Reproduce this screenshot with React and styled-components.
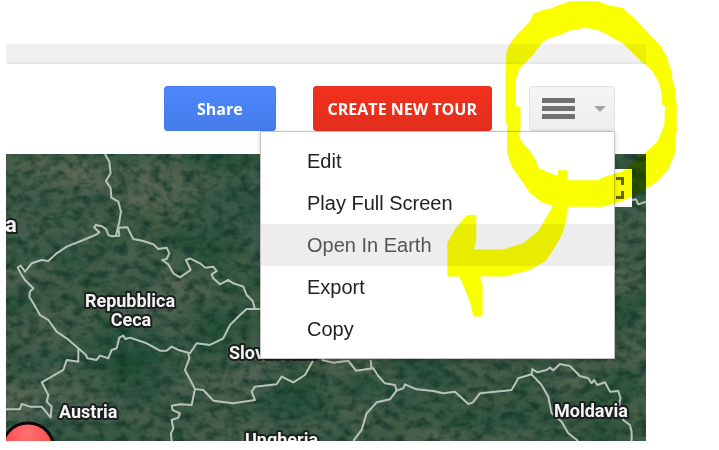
import React from 'react';
import styled, { createGlobalStyle } from 'styled-components';

const menuItems = ['Edit', 'Play Full Screen', 'Open In Earth', 'Export', 'Copy'];

const borders = [
    '315,27 328,50 332,85 318,108 332,130 334,158 355,170 363,200 358,230 348,272',
    '62,385 53,367 62,362 75,380 95,355 125,345 145,348 170,325 200,305 250,285 290,268 298,262 282,247 288,240 306,244 318,252 325,270 335,274 358,272 355,248 382,247 400,282 430,288 460,298 475,312 500,308 508,325 500,342 487,345 505,358 520,385 540,397 572,375 558,345 570,340 600,355 616,368 640,365 650,378 635,388 640,400 660,418 685,405 700,415 730,425 740,450 758,468 765,492',
    '62,385 75,405 100,430 90,440 88,455 100,475 120,510 145,525 170,560 200,580 235,610 258,630 262,640 290,645 300,632 325,640 335,615 350,610 358,578 370,572 376,582 390,578 440,595 480,617 500,617 515,605 535,615 560,622 570,625 590,595 630,600 670,580 690,540 720,510 740,492 785,492',
    '235,612 235,650 200,645 190,675 125,712 145,750 140,770 155,785 152,818 125,785 90,785 65,777 60,793 18,793',
    '565,625 568,640 555,675 585,732 610,735 640,767 700,775 765,765 755,740 765,725 830,718 845,695 880,712 915,690 940,645',
    '585,732 575,780 540,778 515,782 518,795 540,805 535,818 515,825 520,850 513,865 515,888',
    '965,645 1000,653 1045,647 1068,677 1120,670 1135,693 1155,715 1185,720 1190,737 1210,730 1215,718 1250,733 1300,738 1330,745 1365,740 1405,777 1418,773 1440,745 1535,735 1555,700 1595,688 1597,672 1612,682 1640,675 1650,668 1660,676 1680,657 1710,663 1740,693 1765,700 1775,715 1782,705 1792,720 1815,712 1830,740 1855,738 1862,760 1858,775 1870,825 1890,840 1895,860 1895,888',
    '1112,645 1115,670',
    '1190,737 1170,763 1130,772 1100,805 1085,855 1060,888',
    '1595,688 1625,720 1645,755 1655,805 1685,830 1705,865 1735,888',
    '1895,165 1908,163 1915,178 1938,170'
];

const places = [
    { name: 'Repubblica', x: 124, y: 153, anchor: 'middle' },
    { name: 'Ceca', x: 125, y: 172, anchor: 'middle' },
    { name: 'Austria', x: 53, y: 264 },
    { name: 'Slovacchia', x: 223, y: 205 },
    { name: 'Ungheria', x: 239, y: 292 },
    { name: 'Moldavia', x: 548, y: 263 }
];

const Terrain = () => (
    <MapDrawing viewBox="0 0 640 287" preserveAspectRatio="xMinYMin slice" role="img" aria-label="Satellite map">
        <defs>
            <filter id="patches" x="0" y="0" width="100%" height="100%" colorInterpolationFilters="sRGB">
                <feTurbulence type="fractalNoise" baseFrequency="0.011 0.018" numOctaves="5" seed="8" />
                <feColorMatrix values="0.34 0 0 0 0.08  0.14 0 0 0 0.29  0.16 0.06 0 0 0.17  0 0 0 0 1" />
            </filter>
            <filter id="grain" x="0" y="0" width="100%" height="100%" colorInterpolationFilters="sRGB">
                <feTurbulence type="fractalNoise" baseFrequency="0.09 0.12" numOctaves="4" seed="21" />
                <feColorMatrix values="0 0 0 0 0.06  0 0 0 0 0.2  0 0 0 0 0.15  0 1.8 0 0 -0.72" />
            </filter>
            <radialGradient id="pin" cx="50%" cy="20%" r="70%">
                <stop offset="0" stopColor="#ff7272" />
                <stop offset="1" stopColor="#f93a3a" />
            </radialGradient>
        </defs>
        <rect width="640" height="287" fill="#3e5b48" />
        <rect width="640" height="287" filter="url(#patches)" />
        <rect width="640" height="287" filter="url(#grain)" />
        <g transform="translate(-6 -9) scale(0.3333)" fill="none" stroke="#b7c3ba" strokeWidth="6" strokeLinejoin="round">
            {borders.map(points => <polyline points={points} key={points} />)}
        </g>
        {places.map(({ name, x, y, anchor }) => (
            <PlaceName x={x} y={y} textAnchor={anchor} key={name}>{name}</PlaceName>
        ))}
        <PlaceName $large x="-1" y="78">a</PlaceName>
        <circle cx="22" cy="295" r="26" fill="url(#pin)" stroke="#0a0a0a" strokeWidth="3" />
    </MapDrawing>
);

const Highlighter = () => (
    <Ink viewBox="-99 0 692 954" aria-hidden="true">
        <path
            fillRule="evenodd"
            d="M270 4H355L385 15L430 24L465 55L500 92L545 140L565 175L570 200L578 215L579 240L587 265V305L592 308V400L587 405V460L565 512L535 545L480 580L430 605L370 622H263L260 660L250 700L225 745L198 785L150 812L75 832H0L8 855V952H-20L-28 915L-45 870L-62 832H-98V730L-75 690L-40 647H-11V725L-18 750H70L130 732L175 695L205 645L220 620L185 608L150 580L130 550L95 500L82 460V372L77 370V212L80 155L92 130L110 105L150 65L160 42L190 30L215 25L240 14Z
            M315 84L270 92L240 106L215 113L190 125L160 165L120 205L108 240V318L122 322V398L115 402L125 425L155 460L180 508L235 530V512H263V542H355L375 532L430 515L470 480L500 458L535 425L555 375L557 320L548 315V290L540 250L515 210L480 180L430 130L380 103L350 88Z"
        />
    </Ink>
);

export default function App() {
    return (
        <>
            <GlobalStyle />
            <Page>
                <Strip />
                <Toolbar>
                    <ShareButton type="button">Share</ShareButton>
                    <CreateButton type="button">CREATE NEW TOUR</CreateButton>
                    <MenuAnchor>
                        <MenuButton type="button" aria-label="Tour options" aria-expanded="true">
                            <Bars>
                                <Bar />
                                <Bar />
                                <Bar />
                            </Bars>
                            <Caret />
                        </MenuButton>
                        <Menu>
                            {menuItems.map(item => (
                                <li key={item}>
                                    <MenuItem type="button" $active={item === 'Open In Earth'}>{item}</MenuItem>
                                </li>
                            ))}
                        </Menu>
                        <Highlighter />
                    </MenuAnchor>
                </Toolbar>
                <MapArea>
                    <Terrain />
                    <FullScreenButton type="button" aria-label="Full screen">
                        <svg width="22" height="22" viewBox="0 0 22 22" fill="none" stroke="#666" strokeWidth="3">
                            <path d="M1.5 8V1.5H8M14 1.5H20.5V8M20.5 14V20.5H14M8 20.5H1.5V14" />
                        </svg>
                    </FullScreenButton>
                </MapArea>
            </Page>
        </>
    );
}

const GlobalStyle = createGlobalStyle`
    * {
        box-sizing: border-box;
    }

    body {
        margin: 0;
        background: #fff;
        font-family: "Liberation Sans", Arial, sans-serif;
    }
`;

const Page = styled.main`
    padding: 44px 73px 9px 6px;
`;

const Strip = styled.div`
    height: 20px;
    background: #f0f0f0;
    border-bottom: 2px solid #e7e7e7;
`;

const Toolbar = styled.header`
    display: flex;
    justify-content: flex-end;
    gap: 37px;
    padding: 22px 31px 23px 0;
`;

const Button = styled.button`
    height: 45px;
    border: 1px solid transparent;
    border-radius: 3px;
    cursor: pointer;
`;

const ActionButton = styled(Button)`
    color: #fff;
    font-family: "Open Sans", sans-serif;
    font-size: 16px;
    font-weight: 700;
    white-space: nowrap;
`;

const ShareButton = styled(ActionButton)`
    padding: 0 32px;
    background: linear-gradient(#4d88fd, #457be9);
    border-color: #3f7af0;
`;

const CreateButton = styled(ActionButton)`
    padding: 0 14px;
    background: linear-gradient(#f2301e, #e22e1c);
    border-color: #e5301f;
`;

const MenuAnchor = styled.div`
    position: relative;
`;

const MenuButton = styled(Button)`
    display: flex;
    align-items: center;
    gap: 19px;
    padding: 0 8px 0 12px;
    background: linear-gradient(#f5f5f5, #eeeeee);
    border-color: #e2e2e2;
`;

const Bars = styled.span`
    display: grid;
    gap: 3px;
    width: 33px;
`;

const Bar = styled.span`
    height: 5px;
    background: #717171;
`;

const Caret = styled.span`
    border: 6px solid transparent;
    border-top-color: #a3a3a3;
    border-bottom: 0;
`;

const Menu = styled.ul`
    position: absolute;
    top: 100%;
    right: 0;
    z-index: 1;
    width: 355px;
    margin: 0;
    padding: 8px 0;
    list-style: none;
    background: #fff;
    border: 1px solid #c4c4c4;
    box-shadow: 0 2px 5px rgba(0, 0, 0, 0.2);
`;

const MenuItem = styled.button`
    display: block;
    width: 100%;
    height: 42px;
    padding: 0 46px;
    border: 0;
    background: ${props => props.$active ? '#ededed' : 'transparent'};
    color: ${props => props.$active ? '#555' : '#222'};
    font-family: inherit;
    font-size: 20px;
    text-align: left;
    cursor: pointer;
`;

const Ink = styled.svg`
    position: absolute;
    top: -86px;
    right: -62px;
    z-index: 2;
    width: 230px;
    fill: #faff00;
    mix-blend-mode: multiply;
    pointer-events: none;
`;

const MapArea = styled.section`
    position: relative;
    overflow: hidden;
`;

const MapDrawing = styled.svg`
    display: block;
    width: 100%;
`;

const PlaceName = styled.text`
    fill: #f4f4f4;
    stroke: #1b1f1d;
    stroke-width: 4px;
    stroke-linejoin: round;
    paint-order: stroke;
    font-family: Roboto, sans-serif;
    font-size: ${props => props.$large ? '22px' : '18px'};
    font-weight: 700;
`;

const FullScreenButton = styled.button`
    position: absolute;
    top: 15px;
    right: 14px;
    display: grid;
    place-items: center;
    width: 38px;
    height: 38px;
    padding: 0;
    border: 0;
    background: #fff;
    cursor: pointer;
`;
